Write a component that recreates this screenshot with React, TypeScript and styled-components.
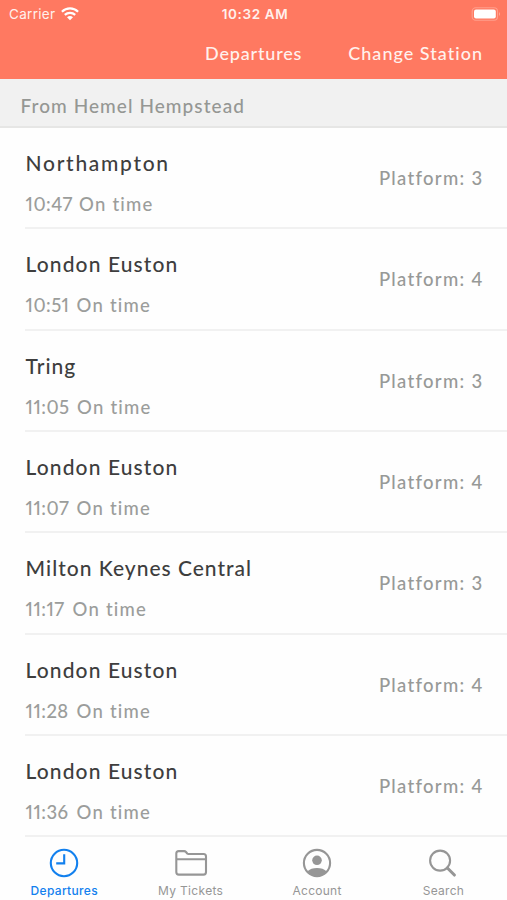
import React from 'react';
import styled, { createGlobalStyle } from 'styled-components';

const GlobalStyle = createGlobalStyle`
  * { box-sizing: border-box; }
  body { margin: 0; background: #fefefe; }
`;

const brand = 'Lato, "Open Sans", sans-serif';
const system = 'Inter, "Liberation Sans", sans-serif';

const Screen = styled.div`
  width: 507px;
  height: 900px;
  display: flex;
  flex-direction: column;
  overflow: hidden;
  background: #fefefe;
  font-family: ${brand};
  font-weight: 500;
  white-space: nowrap;
`;

const Header = styled.header`
  flex: none;
  height: 79px;
  background: #ff7961;
  color: #fff1ed;
`;

const StatusBar = styled.div`
  height: 28px;
  padding: 0 6px 0 9px;
  display: grid;
  grid-template-columns: 1fr auto 1fr;
  align-items: center;
  font: 400 13.5px/28px ${system};
`;

const Carrier = styled.div`
  display: flex;
  align-items: center;
  gap: 6px;
  letter-spacing: 0.3px;
`;

const Clock = styled.div`
  font-weight: 600;
  letter-spacing: 0.6px;
`;

const BatterySlot = styled.div`
  display: flex;
  justify-content: flex-end;
`;

const NavBar = styled.nav`
  height: 51px;
  padding: 0 24px 0 205px;
  display: flex;
  justify-content: space-between;
  font-size: 18px;
  line-height: 51px;
`;

const NavItem = styled.span<{ $tracking: number }>`
  letter-spacing: ${(p) => p.$tracking}px;
`;

const SectionTitle = styled.h2`
  flex: none;
  height: 49px;
  margin: 0;
  padding-left: 20.5px;
  border-bottom: 2px solid #e6e6e5;
  background: #f1f1f1;
  color: #959794;
  font-size: 19px;
  font-weight: 500;
  line-height: 54px;
  letter-spacing: 1.06px;
`;

const List = styled.ul`
  flex: none;
  margin: 0;
  padding: 0 0 0 25px;
  list-style: none;
`;

const Row = styled.li`
  height: 101.35px;
  padding-right: 23.5px;
  display: flex;
  justify-content: space-between;
  border-bottom: 2px solid #f1f1f1;
`;

const Service = styled.div`
  padding: 21px 0 0 0.6px;
`;

const Destination = styled.div<{ $tracking: number }>`
  color: #3e3e3e;
  font-size: 21px;
  line-height: 28px;
  letter-spacing: ${(p) => p.$tracking}px;
`;

const Timing = styled.div`
  display: flex;
  gap: 7px;
  margin-top: 14px;
  color: #9b9d9b;
  font-size: 18.5px;
  line-height: 26px;
  letter-spacing: 1.2px;
`;

const Time = styled.span<{ $width: number }>`
  width: ${(p) => p.$width}px;
  letter-spacing: 0.45px;
  font-variant-numeric: proportional-nums;
`;

const Platform = styled.div`
  padding-top: 37px;
  color: #979997;
  font-size: 18.5px;
  line-height: 26px;
  letter-spacing: 1.3px;
`;

const TabBar = styled.nav`
  flex: 1;
  display: grid;
  grid-template-columns: repeat(4, 126.4px);
  padding: 10px 0 0 1.1px;
`;

const Tab = styled.div<{ $active?: boolean; $tracking: number }>`
  display: flex;
  flex-direction: column;
  align-items: center;
  color: ${(p) => (p.$active ? '#1280ee' : '#969696')};
  font: ${(p) => (p.$active ? 500 : 400)} 12px/16px ${system};
  letter-spacing: ${(p) => p.$tracking}px;
`;

const TabIcon = styled.svg`
  width: 36px;
  height: 32px;
  margin-bottom: 4px;
  fill: none;
  stroke: currentColor;
  stroke-width: 2.1;
`;

const services = [
  { to: 'Northampton', tracking: 1.7, time: '10:47', width: 46.5, platform: 3 },
  { to: 'London Euston', tracking: 1.1, time: '10:51', width: 44, platform: 4 },
  { to: 'Tring', tracking: 0.95, time: '11:05', width: 44.5, platform: 3 },
  { to: 'London Euston', tracking: 1.1, time: '11:07', width: 44, platform: 4 },
  { to: 'Milton Keynes Central', tracking: 1, time: '11:17', width: 40, platform: 3 },
  { to: 'London Euston', tracking: 1.1, time: '11:28', width: 44, platform: 4 },
  { to: 'London Euston', tracking: 1.1, time: '11:36', width: 44, platform: 4 },
];

const Wifi = () => (
  <svg width="18" height="14" viewBox="0 0 18 14" fill="none" stroke="#fff" strokeWidth="2.2">
    <path d="M.9 4.7C5.5.3 12.5.3 17.1 4.7" />
    <path d="M3.8 7.9C6.8 5.1 11.2 5.1 14.2 7.9" />
    <path d="M6 10.2Q9 7.6 12 10.2L9 13.3Z" fill="#fff" stroke="none" />
  </svg>
);

const Battery = () => (
  <svg width="30" height="15" viewBox="0 0 30 15">
    <rect x="1.2" y=".8" width="25.3" height="12.4" rx="3.5" fill="none" stroke="#ff9f8c" strokeWidth="1.1" />
    <rect x="3" y="2.5" width="21.8" height="9" rx="2" fill="#fff" />
    <path d="M28 5v4Q30 7 28 5" fill="#ffa998" />
  </svg>
);

export default function App() {
  return (
    <>
      <GlobalStyle />
      <Screen>
        <Header>
          <StatusBar>
            <Carrier>Carrier<Wifi /></Carrier>
            <Clock>10:32 AM</Clock>
            <BatterySlot><Battery /></BatterySlot>
          </StatusBar>
          <NavBar>
            <NavItem $tracking={0.82}>Departures</NavItem>
            <NavItem $tracking={1.02}>Change Station</NavItem>
          </NavBar>
        </Header>
        <SectionTitle>From Hemel Hempstead</SectionTitle>
        <List>
          {services.map((s) => (
            <Row key={s.time}>
              <Service>
                <Destination $tracking={s.tracking}>{s.to}</Destination>
                <Timing>
                  <Time $width={s.width}>{s.time}</Time>
                  <span>On time</span>
                </Timing>
              </Service>
              <Platform>Platform: {s.platform}</Platform>
            </Row>
          ))}
        </List>
        <TabBar>
          <Tab $active $tracking={0.33}>
            <TabIcon viewBox="0 0 36 32">
              <circle cx="18" cy="16" r="13.2" />
              <path d="M18.2 7.2V16.4H10.2" />
            </TabIcon>
            Departures
          </Tab>
          <Tab $tracking={0.32}>
            <TabIcon viewBox="0 0 36 32">
              <path d="M3.3 25V6.5Q3.3 4.1 5.7 4.1H11.2Q12.2 4.1 13 5L14.2 6.5Q14.7 7 15.6 7H30.5Q33 7 33 9.5V25Q33 27.6 30.5 27.6H5.8Q3.3 27.6 3.3 25ZM3.3 12.2H33" />
            </TabIcon>
            My Tickets
          </Tab>
          <Tab $tracking={0.27}>
            <TabIcon viewBox="0 0 36 32">
              <circle cx="18" cy="16" r="13.1" />
              <circle cx="18" cy="13.3" r="4.8" fill="currentColor" stroke="none" />
              <path d="M8.2 24.4Q12 21 18 21Q24 21 27.8 24.4Q24 29 18 29Q12 29 8.2 24.4Z" fill="currentColor" stroke="none" />
            </TabIcon>
            Account
          </Tab>
          <Tab $tracking={0.25}>
            <TabIcon viewBox="0 0 36 32">
              <circle cx="15.1" cy="13.6" r="10" />
              <path d="M22.4 21L29.4 28" strokeWidth="3.1" strokeLinecap="round" />
            </TabIcon>
            Search
          </Tab>
        </TabBar>
      </Screen>
    </>
  );
}
